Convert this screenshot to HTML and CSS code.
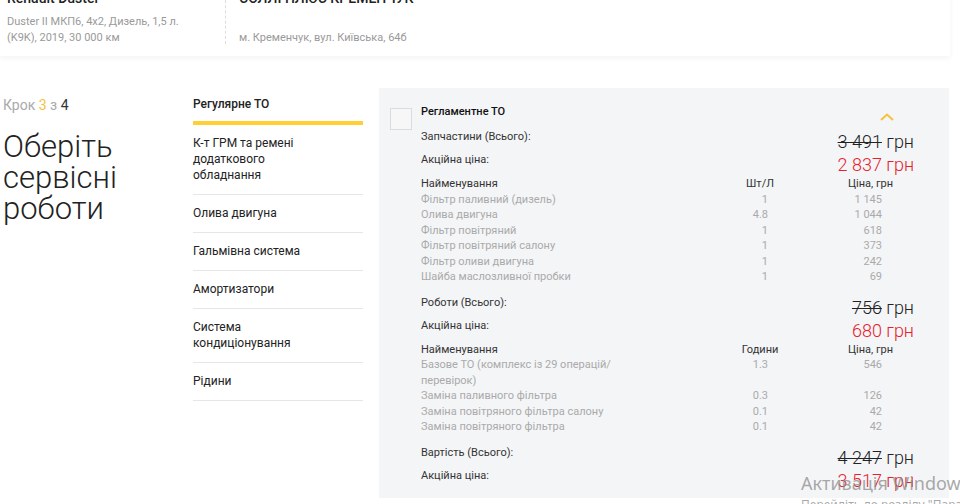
FILE: index.html
```
<!DOCTYPE html>
<html lang="uk">

<head>
    <meta charset="UTF-8">
    <meta name="viewport" content="width=device-width, initial-scale=1.0">
    <title>Сервісні роботи</title>
    <link rel="stylesheet" href="styles.css">
</head>

<body>
    <header class="topbar">
        <div class="car">
            <div class="car-name">Renault Duster</div>
            <div class="muted">Duster II МКП6, 4x2, Дизель, 1,5 л.<br>(K9K), 2019, 30 000 км</div>
        </div>
        <div class="dealer">
            <div class="dealer-name">СОЛЛІ ПЛЮС КРЕМЕНЧУК</div>
            <div class="muted">м. Кременчук, вул. Київська, 64б</div>
        </div>
    </header>

    <main class="layout">
        <div class="intro">
            <div class="step">Крок <span class="step-cur">3</span> з <span class="step-all">4</span></div>
            <h1>Оберіть сервісні роботи</h1>
        </div>

        <ul class="menu">
            <li class="active">Регулярне ТО</li>
            <li>К-т ГРМ та ремені додаткового обладнання</li>
            <li>Олива двигуна</li>
            <li>Гальмівна система</li>
            <li>Амортизатори</li>
            <li>Система кондиціонування</li>
            <li>Рідини</li>
        </ul>

        <section class="panel">
            <div class="check"></div>
            <div class="panel-body">
                <div class="panel-head">
                    <span>Регламентне ТО</span>
                    <svg class="chevron" width="14" height="8" viewBox="0 0 14 8">
                        <polyline points="1,7 7,1.5 13,7" fill="none" stroke="#f8c13b" stroke-width="2" />
                    </svg>
                </div>

                <div class="sum">
                    <span>Запчастини (Всього):</span>
                    <span class="price"><s>3 491</s> грн</span>
                </div>
                <div class="sum">
                    <span>Акційна ціна:</span>
                    <span class="price red">2 837 грн</span>
                </div>
                <div class="items">
                    <div class="th">Найменування</div><div class="th c">Шт/Л</div><div class="th pc">Ціна, грн</div>
                    <div>Фільтр паливний (дизель)</div><div class="n">1</div><div class="p">1 145</div>
                    <div>Олива двигуна</div><div class="n">4.8</div><div class="p">1 044</div>
                    <div>Фільтр повітряний</div><div class="n">1</div><div class="p">618</div>
                    <div>Фільтр повітряний салону</div><div class="n">1</div><div class="p">373</div>
                    <div>Фільтр оливи двигуна</div><div class="n">1</div><div class="p">242</div>
                    <div>Шайба маслозливної пробки</div><div class="n">1</div><div class="p">69</div>
                </div>

                <div class="sum gap">
                    <span>Роботи (Всього):</span>
                    <span class="price"><s>756</s> грн</span>
                </div>
                <div class="sum">
                    <span>Акційна ціна:</span>
                    <span class="price red">680 грн</span>
                </div>
                <div class="items">
                    <div class="th">Найменування</div><div class="th c">Години</div><div class="th pc">Ціна, грн</div>
                    <div>Базове ТО (комплекс із 29 операцій/ перевірок)</div><div class="n">1.3</div><div class="p">546</div>
                    <div>Заміна паливного фільтра</div><div class="n">0.3</div><div class="p">126</div>
                    <div>Заміна повітряного фільтра салону</div><div class="n">0.1</div><div class="p">42</div>
                    <div>Заміна повітряного фільтра</div><div class="n">0.1</div><div class="p">42</div>
                </div>

                <div class="sum gap">
                    <span>Вартість (Всього):</span>
                    <span class="price"><s>4 247</s> грн</span>
                </div>
                <div class="sum">
                    <span>Акційна ціна:</span>
                    <span class="price red">3 517 грн</span>
                </div>
            </div>
        </section>
    </main>

    <div class="activation">
        <div class="act-title">Активація Windows</div>
        <div class="act-sub">Перейдіть до розділу "Параметри"</div>
    </div>
</body>

</html>
```

FILE: styles.css
```
* {
    box-sizing: border-box;
}

body {
    margin: 0;
    font-family: Roboto, "Noto Sans", sans-serif;
    color: #222;
    background: #fff;
    overflow: hidden;
    height: 504px;
}

/* car + dealer card at the top */
.topbar {
    display: flex;
    width: 950px;
    height: 70px;
    margin-top: -14px;
    padding-top: 4px;
    background: #fff;
    box-shadow: 0 2px 6px rgba(0, 0, 0, 0.05);
}

.car {
    width: 226px;
    padding-left: 7px;
    border-right: 1px dashed #ddd;
    height: 54px;
}

.dealer {
    padding-left: 13px;
}

.car-name,
.dealer-name {
    font-size: 14px;
    font-weight: 500;
    line-height: 16px;
    margin-bottom: 8px;
}

.dealer-name {
    margin-bottom: 24px;
}

.muted {
    font-size: 11px;
    line-height: 16px;
    color: #9a9a9a;
}

/* main three columns */
.layout {
    display: flex;
    margin-top: 32px;
}

.intro {
    width: 193px;
    padding: 8px 0 0 3px;
}

.step {
    font-size: 14px;
    color: #aaa;
    line-height: 18px;
}

.step-cur {
    color: #f8c13b;
}

.step-all {
    color: #333;
}

h1 {
    margin: 17px 0 0;
    width: 150px;
    font-size: 31px;
    font-weight: 300;
    line-height: 31px;
    color: #222;
}

.menu {
    list-style: none;
    margin: 0;
    padding: 0;
    width: 170px;
    margin-top: 8px;
}

.menu li {
    font-size: 12px;
    line-height: 16px;
    color: #222;
    padding: 10.5px 38px 10.5px 0;
    border-bottom: 1px solid #e6e6e6;
}

.menu li.active {
    font-weight: 500;
    line-height: 16.5px;
    padding: 0 0 8px;
    border-bottom: 4px solid #ffcf33;
}

/* grey card with service details */
.panel {
    display: flex;
    width: 570px;
    height: 410px;
    margin-left: 16px;
    background: #f4f5f7;
    padding: 15px 35px 0 11px;
}

.check {
    flex: none;
    width: 22px;
    height: 22px;
    margin-top: 5px;
    border: 1px solid #dcdcdc;
    background: #f7f7f8;
}

.panel-body {
    flex: 1;
    margin-left: 9px;
    font-size: 11px;
}

.panel-head {
    display: flex;
    justify-content: space-between;
    align-items: center;
    height: 26px;
    padding-bottom: 10px;
    font-weight: 500;
    color: #111;
}

.chevron {
    margin-right: 20px;
    margin-top: 12px;
}

.sum {
    display: flex;
    justify-content: space-between;
    align-items: flex-start;
    height: 23px;
    color: #333;
}

.sum > span:first-child {
    line-height: 16px;
}

.sum.gap {
    margin-top: 10px;
}

.price {
    font-size: 18px;
    font-weight: 300;
    line-height: 23px;
    margin-top: 1px;
    color: #222;
}

.price s {
    text-decoration-thickness: 1px;
}

.price.red {
    color: #e8202b;
}

/* name | qty | price */
.items {
    display: grid;
    grid-template-columns: 314px 50px 1fr;
    margin-top: 1px;
    line-height: 15.5px;
    color: #aaa;
}

.items > div:nth-child(3n + 1) {
    width: 200px;
}

.items .th {
    color: #333;
}

.items .c {
    text-align: center;
}

.items .pc {
    text-align: center;
    padding-left: 42px;
}

.items .n {
    text-align: right;
    padding-right: 17px;
}

.items .p {
    text-align: right;
    padding-right: 32px;
}

/* system watermark over the corner */
.activation {
    position: absolute;
    left: 801px;
    top: 470px;
    color: rgba(140, 140, 140, 0.75);
    font-family: "Noto Sans", sans-serif;
    white-space: nowrap;
}

.act-title {
    font-size: 18px;
    line-height: 26px;
}

.act-sub {
    font-size: 12px;
    line-height: 18px;
}
```
